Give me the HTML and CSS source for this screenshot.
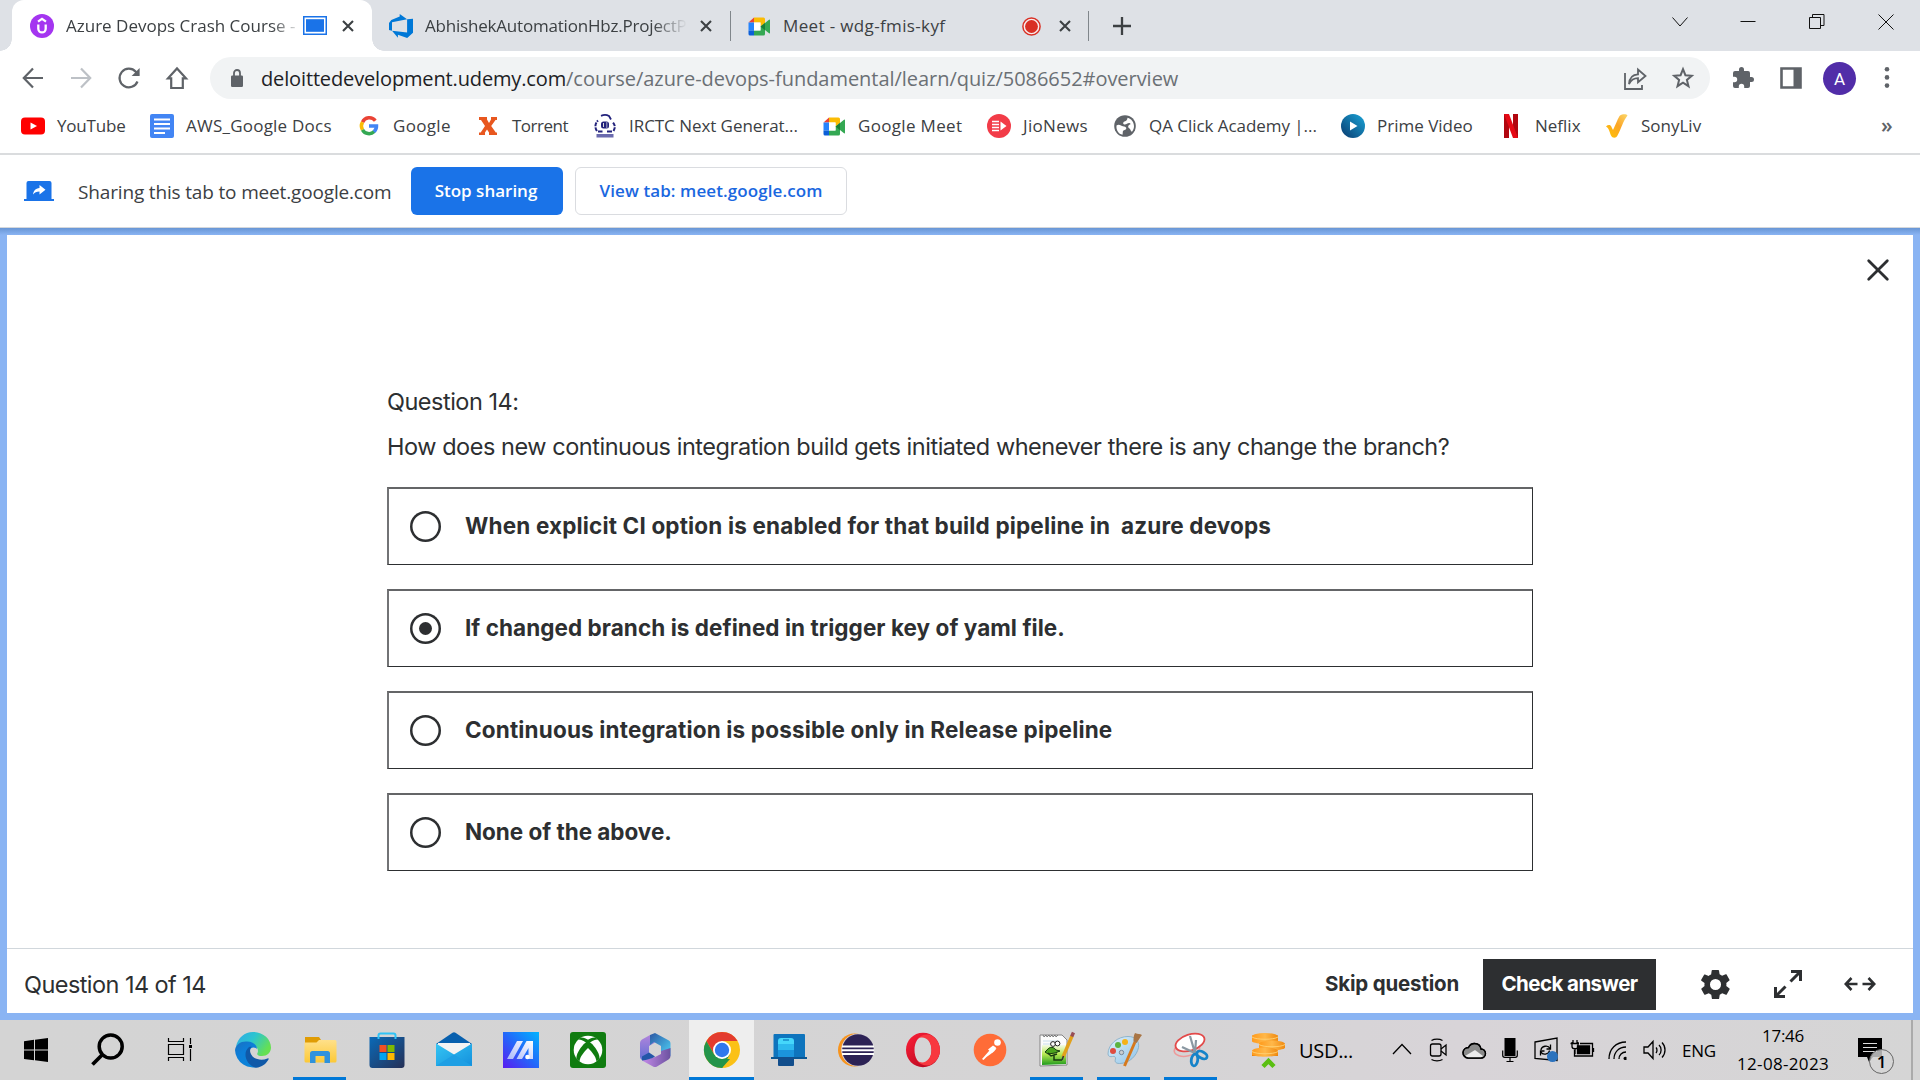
FILE: index.html
```html
<!DOCTYPE html>
<html lang="en">
<head>
<meta charset="utf-8">
<title>Azure Devops Crash Course</title>
<link rel="stylesheet" href="styles.css">
</head>
<body>
<svg class="defs" aria-hidden="true">
  <defs>
    <linearGradient id="edgeTop" x1="0" y1="0" x2="1" y2="0.5"><stop offset="0" stop-color="#2fa8e8"/><stop offset=".5" stop-color="#2cc5cf"/><stop offset="1" stop-color="#66e052"/></linearGradient>
    <linearGradient id="edgeMain" x1="0" y1="0" x2="0.7" y2="1"><stop offset="0" stop-color="#1a6fc0"/><stop offset=".4" stop-color="#0d7ed8"/><stop offset="1" stop-color="#0a84d8"/></linearGradient>
    <linearGradient id="folder" x1="0" y1="0" x2="0" y2="1"><stop offset="0" stop-color="#ffe08a"/><stop offset="1" stop-color="#fcc937"/></linearGradient>
    <linearGradient id="store" x1="0" y1="0" x2="1" y2="1"><stop offset="0" stop-color="#0a6ab8"/><stop offset="1" stop-color="#263056"/></linearGradient>
    <linearGradient id="mail" x1="0" y1="0" x2="1" y2="1"><stop offset="0" stop-color="#35c5f3"/><stop offset="1" stop-color="#1490dd"/></linearGradient>
    <linearGradient id="ma" x1="0" y1="1" x2="1" y2="0"><stop offset="0" stop-color="#5a1cf0"/><stop offset=".5" stop-color="#2368fa"/><stop offset="1" stop-color="#00b4ff"/></linearGradient>
    <linearGradient id="maBar" x1="0" y1="1" x2="1" y2="0"><stop offset="0" stop-color="#a9b8fb"/><stop offset="1" stop-color="#fff"/></linearGradient>
    <linearGradient id="mA" x1="0" y1="0" x2="0" y2="1"><stop offset="0" stop-color="#b184dc"/><stop offset="1" stop-color="#5e6fd4"/></linearGradient>
    <linearGradient id="mB" x1="0" y1="0" x2="1" y2="1"><stop offset="0" stop-color="#2d58a4"/><stop offset="1" stop-color="#4ed3f7"/></linearGradient>
    <linearGradient id="mC" x1="0" y1="0" x2="1" y2="0"><stop offset="0" stop-color="#c58be9"/><stop offset="1" stop-color="#6c52a0"/></linearGradient>
    <linearGradient id="opera" x1="0" y1="0" x2="1" y2="1"><stop offset="0" stop-color="#ff2038"/><stop offset="1" stop-color="#a8031c"/></linearGradient>
    <linearGradient id="prime" x1="1" y1="0" x2="0" y2="1"><stop offset="0" stop-color="#1aa5d8"/><stop offset="1" stop-color="#0a3a6e"/></linearGradient>
    <linearGradient id="sony" x1="0" y1="1" x2="1" y2="0"><stop offset="0" stop-color="#ffc400"/><stop offset=".55" stop-color="#fba526"/><stop offset="1" stop-color="#fbd86a"/></linearGradient>
    <linearGradient id="coin" x1="0" y1="0" x2="1" y2="0"><stop offset="0" stop-color="#ff9a1c"/><stop offset=".5" stop-color="#ffb84a"/><stop offset="1" stop-color="#f08a10"/></linearGradient>
    <linearGradient id="pal" x1="0" y1="0" x2="1" y2="1"><stop offset="0" stop-color="#e2f2fb"/><stop offset="1" stop-color="#8fc3e8"/></linearGradient>
    <linearGradient id="npp" x1="0" y1="0" x2="0" y2="1"><stop offset="0" stop-color="#f4fbe8"/><stop offset=".45" stop-color="#b9ea52"/><stop offset="1" stop-color="#1e9a1c"/></linearGradient>
    <symbol id="x" viewBox="0 0 12 12"><path d="M1 1l10 10M11 1L1 11" stroke="currentColor" stroke-width="2.1" fill="none"/></symbol>
    <symbol id="meet" viewBox="0 0 24 24"><path d="M7 3.500h9.500a1.500 1.500 0 0 1 1.500 1.500v4l-4.500 3.500V8.500H7z" fill="#fbbc04"/><path d="M7 3.500V8.500H1.500z" fill="#ea4335"/><path d="M1.500 8.500H7v8H1.500z" fill="#2684fc"/><path d="M1.500 16.500H7v5H3a1.500 1.500 0 0 1-1.500-1.500z" fill="#0b5fd8"/><path d="M7 16.500h6.500v-4l4.500-3v10.500a1.500 1.500 0 0 1-1.500 1.500H7z" fill="#34a853"/><path d="M7 8.500h6.500v8H7z" fill="#fff"/><path d="M18 9l4-3.200c.5-.4 1-.1 1 .5v12.400c0 .6-.5.900-1 .5L18 16z" fill="#34a853"/><path d="M13.500 12.500L18 8.800v7.400z" fill="#188038"/></symbol>
  </defs>
</svg>

<div class="screen">
  <header class="tabstrip">
    <div class="tab tab-active">
      <svg class="fav" viewBox="0 0 24 24"><circle cx="12" cy="12" r="12" fill="#a435f0"/><path d="M8.300 10.500v4.200a3.700 3.700 0 0 0 7.400 0v-4.200M8 7.600l4-2.700 4 2.700" fill="none" stroke="#fff" stroke-width="2.300"/></svg>
      <span class="tab-title t-azure">Azure Devops Crash Course -</span>
      <svg class="sharing" viewBox="0 0 24 19"><rect x=".75" y=".75" width="22.500" height="17.500" fill="#fff" stroke="#1a73e8" stroke-width="1.500"/><rect x="3" y="3.200" width="18" height="12.600" fill="#1a73e8"/></svg>
      <svg class="tab-x"><use href="#x"/></svg>
    </div>
    <div class="tab tab-two">
      <svg class="fav" viewBox="0 0 24 24"><path d="M0 9l2.300-3 8.400-3.400V0l7.400 5.300L3 8.300v8.500l-3-.9zM24 4.800v14L18.200 24l-9.300-3.200v3L3 16.800l15.100 1.800V5.300z" fill="#0078d7"/></svg>
      <span class="tab-title t-abhi">AbhishekAutomationHbz.ProjectP</span>
      <svg class="tab-x"><use href="#x"/></svg>
    </div>
    <div class="tab tab-three">
      <svg class="fav"><use href="#meet"/></svg>
      <span class="tab-title t-meet">Meet - wdg-fmis-kyf</span>
      <svg class="rec" viewBox="0 0 19 19"><circle cx="9.500" cy="9.500" r="8.600" fill="#f8eeee" stroke="#d93025" stroke-width="1.500"/><circle cx="9.500" cy="9.500" r="6.400" fill="#d93025"/></svg>
      <svg class="tab-x"><use href="#x"/></svg>
    </div>
    <svg class="plus" viewBox="0 0 18 18"><path d="M9 0v18M0 9h18" stroke="#3c4043" stroke-width="2.300"/></svg>
    <div class="window-buttons">
      <svg viewBox="0 0 16 16"><path d="M1.500 3.500L9 12l7.500-8.500" /></svg>
      <svg viewBox="0 0 16 16"><path d="M.5 7.500h15" /></svg>
      <svg viewBox="0 0 16 16"><path d="M.5 3.500h11v11h-11zM3.500 3.500v-3h11.500v11h-3.500" /></svg>
      <svg viewBox="0 0 16 16"><path d="M.5.500l15 15M15.500.500l-15 15" /></svg>
    </div>
  </header>

  <nav class="toolbar">
    <div class="nav-buttons">
      <svg viewBox="0 0 24 24"><path d="M22 12H3M12 2.500L2.800 12l9.200 9.500"/></svg>
      <svg class="off" viewBox="0 0 24 24"><path d="M2 12h19M12 2.500l9.200 9.500-9.200 9.500"/></svg>
      <svg viewBox="0 0 24 24"><path d="M20.500 15.500A9.300 9.300 0 1 1 18.800 5.800L21.500 9"/><path d="M22.600 2v8h-8z" fill="#5f6368" stroke="none"/></svg>
      <svg viewBox="0 0 24 24"><path d="M3 12.300h3.200V22h11.600v-9.700H21L12 2.500z"/></svg>
    </div>
    <div class="omnibox">
      <svg class="lock" viewBox="0 0 12 18"><path d="M1.200 6.500h9.600A1.200 1.200 0 0 1 12 7.700v9.100a1.200 1.200 0 0 1-1.200 1.200H1.200A1.200 1.200 0 0 1 0 16.800V7.700a1.200 1.200 0 0 1 1.200-1.200z" fill="#5f6368"/><path d="M3 7V4a3 3 0 0 1 6 0v3" fill="none" stroke="#5f6368" stroke-width="1.800"/></svg>
      <div class="url"><span class="host">deloittedevelopment.udemy.com</span><span class="path">/course/azure-devops-fundamental/learn/quiz/5086652#overview</span></div>
      <svg class="share" viewBox="0 0 24 24"><path d="M2 7v16h17v-4" /><path d="M6 18c.5-6.500 4-9.500 9-9.700V3.500L22.500 10l-7.500 6.300v-4.200c-4 0-7 2-9 5.900z"/></svg>
      <svg class="share" viewBox="0 0 24 24"><path d="M12 3.200l2.400 6 6.400.5-4.900 4.200 1.600 6.300-5.500-3.500-5.500 3.500 1.600-6.300-4.900-4.200 6.400-.5z" stroke-width="2"/></svg>
    </div>
    <div class="actions">
      <svg viewBox="0 0 24 24"><path d="M20.500 11H19V7a2 2 0 0 0-2-2h-4V3.500a2.500 2.500 0 0 0-5 0V5H4a2 2 0 0 0-2 2v3.800h1.500a2.700 2.700 0 0 1 0 5.400H2V20a2 2 0 0 0 2 2h3.800v-1.500a2.700 2.700 0 0 1 5.400 0V22H17a2 2 0 0 0 2-2v-4h1.500a2.500 2.500 0 0 0 0-5z" fill="#5f6368"/></svg>
      <svg viewBox="0 0 24 24"><path d="M2.500 2.500h19v19h-19z" fill="none" stroke="#5f6368" stroke-width="2.600"/><path d="M14.500 2.500H21.500v19h-7z" fill="#5f6368"/></svg>
      <div class="avatar">A</div>
      <svg viewBox="0 0 24 24"><g fill="#5f6368"><circle cx="12" cy="3.200" r="2.300"/><circle cx="12" cy="11.400" r="2.300"/><circle cx="12" cy="19.600" r="2.300"/></g></svg>
    </div>
  </nav>

  <div class="bookmarks">
    <a class="bm b1"><svg viewBox="0 0 24 24"><rect y="3.500" width="24" height="17" rx="4" fill="#f00"/><path d="M9.500 8.500l6.500 3.500-6.500 3.500z" fill="#fff"/></svg><span>YouTube</span></a>
    <a class="bm b2"><svg viewBox="0 0 24 24"><rect width="24" height="24" rx="2" fill="#4285f4"/><path d="M4 5.500h16M4 10h16M4 14.500h16M4 19h11" stroke="#fff" stroke-width="2.200"/></svg><span>AWS_Google Docs</span></a>
    <a class="bm b3"><svg viewBox="0 0 24 24"><g fill="none" stroke-width="3.500"><path d="M18.300 6.700A7.500 7.500 0 0 0 5.500 8.300" stroke="#ea4335"/><path d="M5.500 8.200a7.500 7.500 0 0 0 0 7.600" stroke="#fbbc05"/><path d="M5.500 15.800a7.500 7.500 0 0 0 11.700 1.800" stroke="#34a853"/><path d="M12 12h7.500a7.500 7.500 0 0 1-2.500 5.700" stroke="#4285f4"/></g></svg><span>Google</span></a>
    <a class="bm b4"><svg viewBox="0 0 24 24"><path d="M3 3h8v2.500l2 3.500 2-3.500V3h6v3h-1.500L15.200 12l4.600 6.500H21V21h-8v-2.500l-2-3-2 3V21H3v-2.500h1.700L9 12 5 6H3z" fill="#e8571f"/></svg><span>Torrent</span></a>
    <a class="bm b5"><svg viewBox="0 0 24 24"><g fill="none" stroke="#22227c"><path d="M8 1.800c3-1.300 6-1 8 .2l2 3.500" stroke-width="1.800"/><path d="M4 17C1.500 13.500 2 9.500 5 6.500M20.500 17c2-3.500 1.500-6-.5-8.500" stroke-width="2" stroke-dasharray="4 1"/><path d="M5 17.500h4.500M14 17.500h5" stroke-width="1.800"/></g><rect x="8" y="7.500" width="8" height="7" rx="2.500" fill="#22227c"/><path d="M10.500 9v4M13 9h1.500M13 11h1.500M13 13h1.500" stroke="#ddd" stroke-width="1"/><rect x="3.500" y="20" width="17" height="3.500" fill="#6a6aae"/></svg><span>IRCTC Next Generat...</span></a>
    <a class="bm b6"><svg><use href="#meet"/></svg><span>Google Meet</span></a>
    <a class="bm b7"><svg viewBox="0 0 24 24"><circle cx="12" cy="12" r="12" fill="#f23c48"/><path d="M5 7.500h7M5 10.500h7M5 13.500h7M5 16.500h7" stroke="#fff" stroke-width="1.600"/><path d="M13.500 7.500l6 4.500-6 4.500z" fill="#fff"/></svg><span>JioNews</span></a>
    <a class="bm b8"><svg viewBox="0 0 24 24"><circle cx="12" cy="12" r="10.800" fill="#5f6368"/><path d="M3.500 11.500c1.500-1 3-.8 5 .2 1.800.8 3.500.3 4.500 1.800 1 1.500-1 2.500-2.500 3-1 .5-.5 2-1 4.300C5.500 20 3 16 3.500 11.500zM14.500 3.800c4 1 6.500 4.500 6.500 8.500 0 2-.8 4-2 5.500-1.500-.3-1-2.300-2.500-3.300-2-1-1.500-3.500.5-4 1-.3.500-1.500-.8-1.500-2 0-2.500 1.500-4.500 1.500-2 0-2-2.500-.2-3 1.800-.5 3-1.700 3-3.700z" fill="#fff"/></svg><span>QA Click Academy |...</span></a>
    <a class="bm b9"><svg viewBox="0 0 24 24"><circle cx="12" cy="12" r="12" fill="url(#prime)"/><path d="M9 7.500l7.500 4.500L9 16.500z" fill="#fff"/></svg><span>Prime Video</span></a>
    <a class="bm b10"><svg viewBox="0 0 24 24"><path d="M5 0h5v24H5zM14 0h5v24h-5z" fill="#b1060f"/><path d="M5 0h5l9 24h-5z" fill="#e50914"/></svg><span>Neflix</span></a>
    <a class="bm b11"><svg viewBox="0 0 24 24"><path d="M1 12.500c2-2 4.500-2 5.500.5l1.500 3C11 10 13 4 15 1.500 17 0 21.500-.5 22.500 1.500 18 7 16 15 12.500 21.500c-1.500 3-5 3-6.500 0C4.500 18 4 14 1 12.500z" fill="url(#sony)"/></svg><span>SonyLiv</span></a>
    <span class="more">»</span>
  </div>

  <div class="infobar">
    <svg class="cast" viewBox="0 0 30 20"><path d="M4.500 0h21a2 2 0 0 1 2 2v16h-25V2a2 2 0 0 1 2-2zM0 18h30v2H0z" fill="#1a73e8"/><path d="M15.500 4l6 4.700-6 4.700v-3c-3 0-5 .8-6.500 3.200.5-4 2.500-6.200 6.500-6.700z" fill="#fff"/></svg>
    <span class="info-text">Sharing this tab to meet.google.com</span>
    <button class="btn-stop">Stop sharing</button>
    <button class="btn-view">View tab: meet.google.com</button>
  </div>

  <main class="viewport">
    <div class="page">
      <svg class="close" viewBox="0 0 22 22"><path d="M1.700 1.700l18.600 18.600M20.300 1.700L1.700 20.300" stroke="#2d2f31" stroke-width="2.800" stroke-linecap="round"/></svg>
      <section class="quiz">
        <div class="q-num">Question 14:</div>
        <div class="q-text">How does new continuous integration build gets initiated whenever there is any change the branch?</div>
        <div class="options">
          <label class="option"><i class="radio"></i><span class="o1">When explicit CI option is enabled for that build pipeline in &nbsp;azure devops</span></label>
          <label class="option"><i class="radio checked"></i><span class="o2">If changed branch is defined in trigger key of yaml file.</span></label>
          <label class="option"><i class="radio"></i><span class="o3">Continuous integration is possible only in Release pipeline</span></label>
          <label class="option"><i class="radio"></i><span class="o4">None of the above.</span></label>
        </div>
      </section>
      <footer class="quiz-footer">
        <span class="progress">Question 14 of 14</span>
        <span class="skip">Skip question</span>
        <button class="check">Check answer</button>
        <svg class="gear" viewBox="0 0 24 24"><path d="M19.400 13c0-.3.100-.6.100-1s0-.7-.1-1l2.100-1.700c.2-.1.200-.4.100-.6l-2-3.500c-.1-.2-.4-.3-.6-.2l-2.500 1c-.5-.4-1.100-.7-1.700-1l-.4-2.600c0-.2-.2-.4-.5-.4h-4c-.2 0-.5.200-.5.400L9 5.100c-.6.200-1.200.600-1.700 1l-2.500-1c-.2-.1-.5 0-.6.200l-2 3.500c-.1.200-.1.400.100.600L4.500 11c0 .3-.1.700-.1 1s0 .7.100 1l-2.100 1.700c-.2.100-.2.400-.1.600l2 3.500c.1.200.4.300.6.200l2.500-1c.5.400 1.100.7 1.700 1l.4 2.600c0 .2.200.4.500.4h4c.2 0 .5-.2.500-.4l.4-2.600c.6-.3 1.200-.6 1.700-1l2.500 1c.2.100.5 0 .6-.2l2-3.500c.1-.2.100-.5-.1-.6zM12 15.800a3.800 3.800 0 1 1 0-7.600 3.800 3.800 0 0 1 0 7.600z" fill="#2d2f31"/></svg>
        <svg class="expand" viewBox="0 0 28 28"><path d="M17 1.500h9.500V11M26 2L16.500 11.500M1.500 17v9.500H11M2 26l9.500-9.500" fill="none" stroke="#2d2f31" stroke-width="3"/></svg>
        <svg class="widen" viewBox="0 0 32 14"><path d="M7.500 1L1.800 7l5.700 6M1.500 7h12M24.500 1l5.700 6-5.700 6M30.500 7h-12" fill="none" stroke="#2d2f31" stroke-width="2.600"/></svg>
      </footer>
    </div>
  </main>

  <footer class="taskbar">
    <div class="system">
      <svg viewBox="0 0 36 36"><path d="M6 9.200l10-1.400v9.700H6zM17 7.700L30 6v11.500H17zM6 18.500h10v9.800L6 27zM17 18.500h13V30l-13-1.700z"/></svg>
      <svg viewBox="0 0 36 36"><circle cx="20.700" cy="14.500" r="11.500" fill="none" stroke="#000" stroke-width="3.500"/><path d="M12.500 22.500L2.500 32.500" stroke="#000" stroke-width="3.800"/></svg>
      <svg viewBox="0 0 36 36"><path d="M6.500 6v3.500h15V6M6.500 12.500h15v10h-15zM6.500 29v-3.500h15V29M28.500 6v6M28.500 17v12" fill="none" stroke="#000" stroke-width="1.200"/><path d="M27 13h3v3h-3z"/></svg>
    </div>
    <div class="apps">
      <div class="app"><svg viewBox="0 0 36 36"><path d="M1 14.500C3 5.500 9.500 0 18 0c10 0 18 7 18 15.500 0 5-4 8.500-9 8.500-4 0-5.500-1.500-4.500-3C24 18 22 14 17 12 11 9.500 4 11 1 14.500z" fill="url(#edgeTop)"/><path d="M0 18C1 12 6 9 12 9.500c6 0 10 3.500 10 7.500-1.500-2-7-3-8 3-1 7 7 12 14 11.500l-3 2.500A18 18 0 0 1 0 18z" fill="url(#edgeMain)"/><path d="M14 15c-7 6-3 18 7 20.800C27 35 31 32 33.500 27.500c.5-1 0-1.500-1-1-7 3-15 .5-17-5.500-.8-2.500-.5-4.500 1-6.500z" fill="#1059a8"/></svg></div>
      <div class="app on"><svg viewBox="0 0 36 36"><path d="M3 5h14l2 3v3H3z" fill="#e09c04"/><path d="M17 8h16a1.500 1.500 0 0 1 1.500 1.500V29a1.500 1.500 0 0 1-1.500 1.500H4A1.500 1.500 0 0 1 2.500 29V10.500h12z" fill="url(#folder)"/><path d="M8 31V21.500A2.500 2.500 0 0 1 10.500 19h15a2.500 2.500 0 0 1 2.500 2.500V31h-5.500v-7h-9v7z" fill="#2f92dc"/></svg></div>
      <div class="app"><svg viewBox="0 0 36 36"><path d="M.5 5h35v28a3 3 0 0 1-3 3h-29a3 3 0 0 1-3-3z" fill="url(#store)"/><path d="M9.500 7V3.500a2 2 0 0 1 2-2h13a2 2 0 0 1 2 2V7" fill="none" stroke="#2fc3f6" stroke-width="2"/><path d="M10.500 13h7v7h-7z" fill="#f25022"/><path d="M18.500 13h7v7h-7z" fill="#7fba00"/><path d="M10.500 21h7v7h-7z" fill="#00a4ef"/><path d="M18.500 21h7v7h-7z" fill="#ffb900"/></svg></div>
      <div class="app"><svg viewBox="0 0 36 36"><path d="M0 12L16.500.800a3 3 0 0 1 3 0L36 12z" fill="#0860ae"/><path d="M2 11h32v10L18 26 2 21z" fill="#f3f3f3"/><path d="M0 11.500l18 11 18-11V34H0z" fill="url(#mail)"/><path d="M0 34l18-11.500L36 34z" fill="#1e9fe4"/></svg></div>
      <div class="app"><svg viewBox="0 0 36 36"><path d="M0 0h36v36H0z" fill="url(#ma)"/><path d="M4 27L14 9h6L10 27zM13.500 27l10-18H30v18h-4.500V16L19 27z" fill="url(#maBar)"/><circle cx="24.500" cy="25" r="2.300" fill="#fff"/></svg></div>
      <div class="app"><svg viewBox="0 0 36 36"><rect width="36" height="36" rx="3" fill="#107c10"/><circle cx="18" cy="18" r="14.300" fill="#fff"/><path d="M8 7.500c3.500-.5 7 2 10 4.500 3-2.500 6.500-5 10-4.500l-2.500-2C22.500 5.200 20 6.500 18 7.700 16 6.500 13.500 5.200 10.500 5.500zM13.800 12C9.500 17 6 22.500 6.500 27l3 2.500C10 24.500 14 20 18 16c4 4 8 8.500 8.500 13.500l3-2.500c.5-4.500-3-10-7.300-15L18 9z" fill="#107c10"/></svg></div>
      <div class="app"><svg viewBox="0 0 36 36"><path d="M13 3L5 7.500A4 4 0 0 0 3 11v14a4 4 0 0 0 2 3l2 1 7-5a5 5 0 0 1-2-4V14l6-3.500z" fill="url(#mA)"/><path d="M13 3l5-2 13 7a4 4 0 0 1 2.500 4v12L24 22v-8l-7-4-4 3z" fill="url(#mB)"/><path d="M5 28.500L18 25l6-3v-3l9.500-3v8a4 4 0 0 1-2 3.500L20 34.500a4 4 0 0 1-4 0z" fill="url(#mC)"/><path d="M5 28.500c5-.5 10-2 13-4l-6-4-7 4z" fill="#2356a8"/></svg></div>
      <div class="app on current"><svg viewBox="0 0 36 36"><circle cx="18" cy="18" r="18" fill="#fbc116"/><path d="M2.400 9A18 18 0 0 1 33.600 9H18L10 22z" fill="#e33b2e"/><path d="M2.400 9L10.200 22.500 18 27h8L18 36A18 18 0 0 1 2.400 9z" fill="#23944a"/><path d="M18 36l7.800-13.500L18 27z" fill="#23944a"/><circle cx="18" cy="18" r="9" fill="#fff"/><circle cx="18" cy="18" r="7.200" fill="#3078ec"/></svg></div>
      <div class="app"><svg viewBox="0 0 36 36"><rect x="2.500" y="2" width="31.500" height="24" rx="1" fill="#0e74bd"/><path d="M0 25h36v2H0z" fill="#0a5794"/><path d="M7 9a3 3 0 0 1 3-3h10a3 3 0 0 1 3 3v8H7z" fill="#45d7fb"/><path d="M7 12h16v6H7z" fill="#2db9ee"/><path d="M7 18h16v7H7z" fill="#1b94dc"/><path d="M7 25h16v8a1 1 0 0 1-1 1H8a1 1 0 0 1-1-1z" fill="#124e8c"/><path d="M12 8h6" stroke="#168ac8" stroke-width="1.500"/></svg></div>
      <div class="app"><svg viewBox="0 0 36 36"><circle cx="16.500" cy="18" r="16.500" fill="#f7941e"/><circle cx="19.500" cy="18" r="16.300" fill="#d8d3dc"/><circle cx="20" cy="18" r="15.800" fill="#2c2255"/><path d="M4 14.500h32M3.800 18.300h32.400M4 22h32" stroke="#fff" stroke-width="2"/></svg></div>
      <div class="app"><svg viewBox="0 0 36 36"><path fill-rule="evenodd" d="M18 .800C27.500.800 35 8.500 35 18s-7.500 17.200-17 17.200S1 27.500 1 18 8.500.800 18 .800zM18 4.500c-5 0-8.500 6-8.500 13.500S13 31.500 18 31.500 26.500 25.500 26.500 18 23 4.500 18 4.500z" fill="url(#opera)"/><path d="M12.500 7C15 3.500 20 1.500 25 2.800 31 5.500 35 11.500 35 18s-4 12.500-10 15.200c-5 1.300-10-.7-12.500-4.200 7 4.500 14-2 14-11S19.500 2.500 12.500 7z" fill="#f8383f"/></svg></div>
      <div class="app"><svg viewBox="0 0 36 36"><circle cx="18" cy="18" r="16.300" fill="#ff6c37"/><path d="M10 27l10.500-12 4 1.500L22 19.500l-4 3-3.500 2.500L11.500 28z" fill="#fff"/><path d="M16 17.500l5-4 3 2-4 5.500z" fill="#fff"/><circle cx="25.500" cy="10.500" r="3.300" fill="#fff"/></svg></div>
      <div class="app on"><svg viewBox="0 0 36 36"><path d="M1 3h22l5 5v25L1 34z" fill="#fcfcfc" stroke="#858585"/><path d="M3 13h24v19L3 33z" fill="url(#npp)"/><path d="M4 3l1 2 2-2 1 2 2-2 1 2 2-2 1 2 2-2 1 2 2-2" stroke="#666" stroke-width=".8" fill="none"/><path d="M4 9h16M4 12h16" stroke="#bcd7e8" stroke-width=".8"/><path d="M8 18c3-4 7-3 9 0l4 1-5 2-7 1-3-2z" fill="#4ca51d" stroke="#153c10"/><circle cx="14" cy="12" r="2.400" fill="#fff" stroke="#222"/><circle cx="18.500" cy="11.500" r="2.400" fill="#fff" stroke="#222"/><path d="M9 21l3 3 6-2M15 23v5h8" stroke="#173a10" stroke-width="1.500" fill="none"/><path d="M33 4L24 25" stroke="#e2a11b" stroke-width="3.400"/><path d="M34.500 .5l-1.800 4" stroke="#974d55" stroke-width="3.400"/><path d="M24.500 24l-1.500 4" stroke="#333" stroke-width="1.500"/></svg></div>
      <div class="app on"><svg viewBox="0 0 36 36"><path d="M2 22C2 12 12 4.500 22 4.500c8 0 11.500 5 10.500 11-1.500 8-9 16-19 16-4 0-5-2-4-4.500.6-2-1-3-3-2.500S2 24.500 2 22z" fill="url(#pal)" stroke="#7fa9c4" stroke-width=".8"/><circle cx="7" cy="19" r="3" fill="#de4c40"/><circle cx="12" cy="13" r="3" fill="#5cb340"/><circle cx="19" cy="10" r="3" fill="#f5b21b"/><circle cx="15.500" cy="20.500" r="2.200" fill="#c9cdd0" stroke="#789"/><path d="M29 10L18.500 34" stroke="#d6791d" stroke-width="3"/><path d="M27.500 9.500c0-3 0-6 1.500-8.500 3 1.500 5 .5 7 2-2 2-3 5-5.500 8z" fill="#a97545"/></svg></div>
      <div class="app on"><svg viewBox="0 0 36 36"><ellipse cx="14" cy="17" rx="13" ry="7" transform="rotate(-12 14 17)" fill="none" stroke="#ee9a9a" stroke-width="1.500"/><ellipse cx="17" cy="10.500" rx="15" ry="8" transform="rotate(-18 17 10.500)" fill="#fff" stroke="#e24a4a" stroke-width="1.800"/><path d="M17 4l5 17M9 15l13 6 1-13" fill="none" stroke="#8b98a2" stroke-width="2.200"/><ellipse cx="21.500" cy="28" rx="3.200" ry="6" transform="rotate(8 21.500 28)" fill="none" stroke="#1583c9" stroke-width="2.800"/><ellipse cx="29" cy="23" rx="5.500" ry="3.200" transform="rotate(28 29 23)" fill="none" stroke="#1583c9" stroke-width="2.800"/></svg></div>
    </div>
    <div class="news">
      <svg viewBox="0 0 36 36"><g fill="#e88410"><path d="M3 3.500h26v5H3zM10 11.500h25v5H10zM3 20h26v4H3z"/></g><g fill="url(#coin)"><ellipse cx="16" cy="4.500" rx="13" ry="3.500"/><path d="M3 4.500h26v5c-3 3-23 3-26 0z"/><ellipse cx="23" cy="12" rx="13" ry="3.500"/><path d="M10 12h26v4c-3 3-23 3-26 0z"/><ellipse cx="16" cy="19" rx="13" ry="3.500"/><path d="M3 19h26v3.500c-3 3-23 3-26 0z"/></g><path d="M3 5c4 3 22 3 26 0M10 12.500c4 3 22 3 26 0M3 19.500c4 3 22 3 26 0" stroke="#ffcf70" fill="none"/><path d="M14 34.500l5.500-5.500 5.500 5.500" stroke="#5abf12" stroke-width="4.500" fill="none"/></svg>
      <span>USD...</span>
    </div>
    <div class="tray">
      <svg viewBox="0 0 24 24"><path d="M3 16l9-9.500 9 9.500"/></svg>
      <svg viewBox="0 0 24 24"><rect x="4.500" y="6" width="10.500" height="12" rx="2"/><path d="M15 11l5-4v10l-5-4M5.500 2.500c3-1.800 8-1.800 11 0M5.500 21.500c3 1.800 8 1.800 11 0"/></svg>
      <svg viewBox="0 0 24 24"><path d="M6 20h13a4.500 4.500 0 0 0 0-9c-.5-3-3-5.500-6.500-5.500-3 0-5 1.800-6 4A5.200 5.200 0 0 0 6 20z" fill="#8b8b8b"/><path d="M3 18l10-6 8 6-2 2H6z" fill="#ececec" stroke="none"/><path d="M6 20h13a4.500 4.500 0 0 0 0-9c-.5-3-3-5.500-6.500-5.500-3 0-5 1.800-6 4A5.200 5.200 0 0 0 6 20z"/></svg>
      <svg viewBox="0 0 24 24"><path d="M6.500 0h11v18h-11z" fill="#000" stroke="none"/><path d="M4.700 12.500v4.800a2 2 0 0 0 2 2h10.600a2 2 0 0 0 2-2v-4.800M12 19.500V23M8.500 23.500h7" stroke-width="1.200"/></svg>
      <svg viewBox="0 0 24 24"><path d="M1 4l22-4v22.500L1 20.500zM7 12c.5-4 7-5.500 9-1.500M16.500 6.500v4.500h-4M15.500 12.500c-.5 4-7 5-8.500 1.500M6.500 17.500V13h4"/><circle cx="18.500" cy="18.500" r="5.500" fill="#2b72bd" stroke="none"/></svg>
      <svg viewBox="0 0 24 24"><path d="M7.500 8h12v7.500h-12z" fill="#000"/><path d="M4.500 12v6h18V5.500H10M23.500 10v4M2 4v4.500c0 3 6 3 6 0V4M.5 5.500H9M3 2v3M7 2v3M5 11v5"/></svg>
      <svg viewBox="0 0 24 24"><path d="M3 21C3 11 10 4 20 4M8 21c0-7 5-12 12-12M13 21c0-4 3-7 7-7"/><path d="M17.500 21a2 2 0 0 1 3-2v3h-2z" fill="#000" stroke="none"/></svg>
      <svg viewBox="0 0 24 24"><path d="M2 9h4l5-5.500v17L6 15H2zM14 9.500c1.300 1.300 1.300 4 0 5.500M17 7c2.800 2.500 2.800 7.500 0 10M20 4.500c4 4 4 11 0 15"/></svg>
    </div>
    <div class="lang">ENG</div>
    <div class="clock"><span class="time">17:46</span><span class="date">12-08-2023</span></div>
    <div class="notify"><svg viewBox="0 0 26 26"><path d="M0 0h24v19H15l-4 5-2-5H0z"/><path d="M5 5.500h14M5 9.500h14M5 13.500h14" stroke="#ddd" stroke-width="1.200"/></svg><span class="badge">1</span></div>
  </footer>
</div>
</body>
</html>
```
FILE: styles.css
```css
* { box-sizing: border-box; }
body { margin: 0; font-family: "Open Sans", "Noto Sans", sans-serif; font-size: 17px; color: #3c4043; }
svg { display: block; flex: none; overflow: visible; }
button { font: inherit; margin: 0; padding: 0; cursor: pointer; }
.defs { position: absolute; width: 0; height: 0; }
.screen { width: 1920px; height: 1080px; display: flex; flex-direction: column; overflow: hidden; background: #fff; }

/* tab strip */
.tabstrip { height: 51px; flex: none; display: flex; background: #dee1e6; }
.tab { display: flex; align-items: center; height: 51px; }
.fav { width: 24px; height: 24px; }
.tab-title { margin-left: 12px; white-space: nowrap; overflow: hidden; line-height: 26px; }
.tab-x { width: 12px; height: 12px; color: #3c4043; }
.tab-active { margin-left: 12px; width: 360px; background: #fff; border-radius: 12px 12px 0 0; padding-left: 18px; position: relative; }
.tab-active::before, .tab-active::after { content: ""; position: absolute; bottom: 0; width: 12px; height: 12px; }
.tab-active::before { left: -12px; background: radial-gradient(circle at 0 0, transparent 11.500px, #fff 12px); }
.tab-active::after { right: -12px; background: radial-gradient(circle at 100% 0, transparent 11.500px, #fff 12px); }
.t-azure { width: 230px; mask-image: linear-gradient(90deg, #000 205px, transparent 236px); }
.sharing { width: 24px; height: 19px; margin-left: 7px; }
.tab-active .tab-x { margin-left: 15px; }
.tab-two { width: 358px; padding-left: 17px; }
.t-abhi { width: 262px; letter-spacing: -.2px; mask-image: linear-gradient(90deg, #000 228px, transparent 262px); }
.tab-two .tab-x { margin-left: 13px; }
.tab-three { width: 359px; height: 30px; margin-top: 11px; padding-left: 16px; border-left: 1px solid #80868b; border-right: 1px solid #80868b; }
.t-meet { width: 227px; letter-spacing: .36px; }
.rec { width: 19px; height: 19px; margin-left: 12px; }
.tab-three .tab-x { margin-left: 18px; }
.plus { width: 18px; height: 18px; margin: 17px 0 0 24px; }
.window-buttons { display: flex; gap: 53px; margin: 14px 26px 0 auto; }
.window-buttons svg { width: 16px; height: 16px; fill: none; stroke: #111; stroke-width: 1; }

/* toolbar */
.toolbar { height: 54px; flex: none; display: flex; align-items: center; }
.nav-buttons { display: flex; gap: 24px; padding-left: 21px; width: 210px; }
.nav-buttons svg { width: 24px; height: 24px; fill: none; stroke: #5f6368; stroke-width: 2.200; }
.nav-buttons .off { stroke: #bdc1c6; }
.omnibox { width: 1500px; height: 42px; border-radius: 21px; background: #f1f3f4; display: flex; align-items: center; padding: 0 15px 0 21px; }
.lock { width: 12px; height: 18px; margin-right: 18px; }
.url { flex: 1; font-size: 20px; line-height: 28px; white-space: nowrap; color: #6b7075; padding-top: 1px; }
.host { color: #202124; letter-spacing: -.14px; }
.path { letter-spacing: -.04px; }
.share { width: 24px; height: 24px; fill: none; stroke: #5f6368; stroke-width: 1.800; }
.share + .share { margin-left: 24px; }
.actions { flex: 1; display: flex; align-items: center; padding-left: 21px; }
.actions svg { width: 24px; height: 24px; }
.actions svg + svg { margin-left: 24px; }
.avatar { width: 33px; height: 33px; margin: 0 19px 0 20px; border-radius: 50%; background: #512da8; color: #fff; font: 17px/34px Roboto, sans-serif; text-align: center; }

/* bookmarks */
.bookmarks { height: 50px; flex: none; padding: 0 0 6px 21px; border-bottom: 2px solid #dadcde; display: grid; grid-template-columns: 129px 207px 119px 117px 229px 165px 126px 228px 158px 106px 270px auto; align-items: center; }
.bm { display: flex; align-items: center; white-space: nowrap; line-height: 24px; }
.bm svg { width: 24px; height: 24px; margin-right: 12px; }
.b1 { letter-spacing: -.2px; }
.b2 { letter-spacing: .23px; }
.b3, .b6, .b7 { letter-spacing: .32px; }
.b4 { letter-spacing: -.5px; }
.b5 { letter-spacing: -.05px; }
.b8 { letter-spacing: -.05px; }
.more { font-size: 21px; line-height: 24px; font-weight: 600; color: #5f6368; padding-bottom: 3px; margin-left: 6px; }

/* sharing infobar */
.infobar { height: 73px; flex: none; display: flex; align-items: center; padding: 0 0 1px 24px; border-bottom: 1px solid #d5d8dc; }
.cast { width: 30px; height: 20px; }
.info-text { width: 333px; margin-left: 24px; font-size: 19px; line-height: 26px; letter-spacing: -.16px; padding-top: 2px; white-space: nowrap; }
.btn-stop { width: 152px; height: 48px; padding-right: 2px; border: 0; border-radius: 6px; background: #1a73e8; color: #fff; font-weight: 600; }
.btn-view { width: 272px; height: 48px; margin-left: 12px; border: 1px solid #dadce0; border-radius: 6px; background: #fff; color: #1a67e0; font-weight: 600; letter-spacing: .09px; }

/* shared tab frame */
.viewport { flex: 1; min-height: 0; padding: 7px; background: linear-gradient(#6896d5, #8ab4f3 7px, #8ab4f3); }
.page { height: 778px; background: #fff; color: #2d2f31; font-family: Inter, sans-serif; display: flex; flex-direction: column; }
.close { width: 22px; height: 22px; margin: 24px 24px 0 auto; }
.quiz { width: 1146px; margin: 104px 0 0 380px; }
.q-num, .q-text { font-size: 23.500px; line-height: 34px; letter-spacing: -.46px; white-space: nowrap; }
.q-num { letter-spacing: -.5px; }
.q-text { margin-top: 11px; }
.options { display: grid; gap: 24px; margin-top: 23px; }
.option { height: 78px; border: 1px solid #2d2f31; border-top: 2px solid #646567; border-left: 2px solid #727375; display: flex; align-items: center; gap: 24px; padding: 0 0 1px 21px; font-size: 22.500px; font-weight: 700; white-space: nowrap; }
.option span { position: relative; top: -1px; }
.radio { width: 31px; height: 31px; flex: none; box-shadow: inset 0 0 0 2.500px #2d2f31; border-radius: 50%; display: grid; place-items: center; }
.checked::after { content: ""; width: 13px; height: 13px; border-radius: 50%; background: #2d2f31; }
.o1, .o3 { letter-spacing: .16px; }
.o2 { letter-spacing: .05px; }
.o4 { letter-spacing: -.04px; }
.quiz-footer { height: 65px; margin-top: auto; border-top: 1px solid #d1d7dc; display: flex; align-items: center; padding: 6px 37px 0 17px; }
.progress { font-size: 23.500px; letter-spacing: -.56px; flex: 1; }
.skip { font-size: 20.500px; font-weight: 700; letter-spacing: -.18px; width: 158px; padding-bottom: 2px; }
.check { width: 173px; height: 51px; padding-bottom: 2px; border: 0; background: #2d2f31; color: #fff; font-size: 20.500px; font-weight: 700; letter-spacing: -.55px; }
.gear { width: 35px; height: 35px; margin-left: 42px; }
.expand { width: 28px; height: 28px; margin-left: 41px; }
.widen { width: 32px; height: 14px; margin-left: 42px; }

/* taskbar */
.taskbar { height: 60px; flex: none; display: flex; align-items: center; background: linear-gradient(90deg, #d4d4d4, #d5d4d5 60%, #d8d4d8 76%, #d5d5d5); color: #000; }
.system { display: flex; gap: 36px; padding-left: 18px; width: 219px; }
.system svg { width: 36px; height: 36px; }
.apps { display: flex; height: 60px; width: 1005px; }
.app { width: 67px; display: flex; align-items: center; justify-content: center; }
.app svg { width: 36px; height: 36px; }
.on { background: linear-gradient(#0078d7, #0078d7) center bottom / 53px 3px no-repeat; }
.current { width: 65px; margin: 0 1px; background: linear-gradient(#0078d7, #0078d7) bottom / 100% 3px no-repeat #eee; }
.news { width: 160px; padding-left: 25px; display: flex; align-items: center; gap: 14px; font-size: 20px; letter-spacing: -.3px; }
.news svg { width: 36px; height: 36px; }
.tray { width: 288px; display: grid; grid-template-columns: repeat(8, 36px); justify-items: center; }
.tray svg { width: 24px; height: 24px; fill: none; stroke: #000; stroke-width: 1.300; }
.lang { width: 54px; text-align: center; letter-spacing: -.2px; }
.clock { width: 114px; display: flex; flex-direction: column; align-items: center; line-height: 28px; }
.time { letter-spacing: -.27px; }
.date { letter-spacing: .33px; }
.notify { width: 73px; height: 60px; padding: 18px 0 0 18px; border-right: 2px solid #aaa; position: relative; }
.notify svg { width: 26px; height: 26px; }
.badge { position: absolute; left: 29px; top: 29px; width: 25px; height: 25px; border: 1px solid #666; border-radius: 50%; background: rgba(214, 214, 214, .8); text-align: center; font-size: 17px; line-height: 23px; font-weight: 600; }
```
